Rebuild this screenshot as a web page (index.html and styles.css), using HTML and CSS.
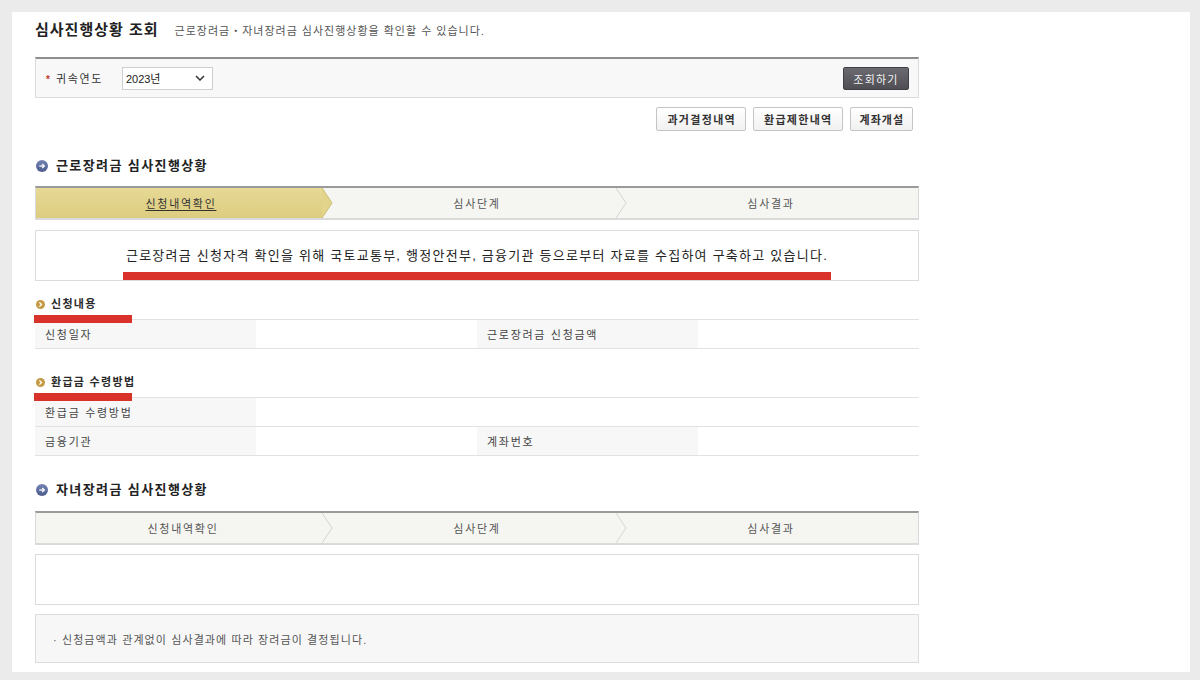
FILE: index.html
```html
<!DOCTYPE html>
<html lang="ko">
<head>
<meta charset="utf-8">
<title>심사진행상황 조회</title>
<link rel="stylesheet" href="styles.css">
</head>
<body>
<div class="frame">
  <div class="panel">
    <div class="content">
      <div class="page-head">
        <h1>심사진행상황 조회</h1>
        <p>근로장려금・자녀장려금 심사진행상황을 확인할 수 있습니다.</p>
      </div>

      <div class="search">
        <div class="field">
          <span class="req">*</span>
          <span class="label">귀속연도</span>
          <div class="select">2023년
            <svg class="sel-chev" width="10" height="6" viewBox="0 0 10 6"><polyline points="1,1 5,5 9,1" fill="none" stroke="#333" stroke-width="1.5"/></svg>
          </div>
        </div>
        <button class="btn-dark">조회하기</button>
      </div>

      <div class="btn-row">
        <button class="btn">과거결정내역</button>
        <button class="btn">환급제한내역</button>
        <button class="btn">계좌개설</button>
      </div>

      <h2 class="sec-title">
        <svg class="ico-sec" width="12" height="12" viewBox="0 0 12 12"><defs><linearGradient id="g1" x1="0" y1="0" x2="0" y2="1"><stop offset="0" stop-color="#7384b4"/><stop offset="1" stop-color="#4c5c8c"/></linearGradient></defs><circle cx="6" cy="6" r="6" fill="url(#g1)"/><line x1="3.3" y1="6" x2="8.2" y2="6" stroke="#fff" stroke-width="1.3"/><polyline points="6.2,4 8.3,6 6.2,8" fill="none" stroke="#fff" stroke-width="1.3"/></svg>
        근로장려금 심사진행상황
      </h2>

      <div class="steps">
        <div class="step active"><a class="step-link">신청내역확인</a>
          <svg class="chev" width="11" height="30" viewBox="0 0 11 30" preserveAspectRatio="none"><polygon points="0,0 10,15 0,30" fill="#e2d48b"/><polyline points="0,0 10,15 0,30" fill="none" stroke="#cbbb70" stroke-width="1"/></svg>
        </div>
        <div class="step">심사단계
          <svg class="chev" width="11" height="30" viewBox="0 0 11 30" preserveAspectRatio="none"><polyline points="0,0 10,15 0,30" fill="none" stroke="#d3d3d3" stroke-width="1"/></svg>
        </div>
        <div class="step">심사결과</div>
      </div>

      <div class="msg"><span class="mark">근로장려금 신청자격 확인을 위해 국토교통부, 행정안전부, 금융기관 등으로부터 자료를 수집하여 구축하고 있습니다.</span></div>

      <h3 class="sub-title">
        <svg class="ico-sub" width="9" height="9" viewBox="0 0 9 9"><circle cx="4.5" cy="4.5" r="4.5" fill="#c49a45"/><polyline points="3.4,2.4 5.5,4.5 3.4,6.6" fill="none" stroke="#fff" stroke-width="1.3"/></svg>
        신청내용
      </h3>
      <table class="info">
        <tr>
          <th>신청일자</th><td></td>
          <th>근로장려금 신청금액</th><td></td>
        </tr>
      </table>

      <h3 class="sub-title second">
        <svg class="ico-sub" width="9" height="9" viewBox="0 0 9 9"><circle cx="4.5" cy="4.5" r="4.5" fill="#c49a45"/><polyline points="3.4,2.4 5.5,4.5 3.4,6.6" fill="none" stroke="#fff" stroke-width="1.3"/></svg>
        환급금 수령방법
      </h3>
      <table class="info">
        <tr>
          <th>환급금 수령방법</th><td colspan="3"></td>
        </tr>
        <tr>
          <th>금융기관</th><td></td>
          <th>계좌번호</th><td></td>
        </tr>
      </table>

      <h2 class="sec-title sec2">
        <svg class="ico-sec" width="12" height="12" viewBox="0 0 12 12"><defs><linearGradient id="g2" x1="0" y1="0" x2="0" y2="1"><stop offset="0" stop-color="#7384b4"/><stop offset="1" stop-color="#4c5c8c"/></linearGradient></defs><circle cx="6" cy="6" r="6" fill="url(#g2)"/><line x1="3.3" y1="6" x2="8.2" y2="6" stroke="#fff" stroke-width="1.3"/><polyline points="6.2,4 8.3,6 6.2,8" fill="none" stroke="#fff" stroke-width="1.3"/></svg>
        자녀장려금 심사진행상황
      </h2>

      <div class="steps steps2">
        <div class="step">신청내역확인
          <svg class="chev" width="11" height="30" viewBox="0 0 11 30" preserveAspectRatio="none"><polyline points="0,0 10,15 0,30" fill="none" stroke="#d3d3d3" stroke-width="1"/></svg>
        </div>
        <div class="step">심사단계
          <svg class="chev" width="11" height="30" viewBox="0 0 11 30" preserveAspectRatio="none"><polyline points="0,0 10,15 0,30" fill="none" stroke="#d3d3d3" stroke-width="1"/></svg>
        </div>
        <div class="step">심사결과</div>
      </div>

      <div class="empty-box"></div>

      <div class="note">· 신청금액과 관계없이 심사결과에 따라 장려금이 결정됩니다.</div>
    </div>
  </div>
</div>
</body>
</html>
```

FILE: styles.css
```css
* {
  box-sizing: border-box;
  margin: 0;
  padding: 0;
}

html, body {
  width: 1200px;
  height: 680px;
  overflow: hidden;
}

body {
  background: #ebebeb;
  font-family: "Liberation Sans", "Noto Sans CJK KR", sans-serif;
  color: #333;
  font-size: 11px;
}

.frame {
  padding: 12px 10px 8px 12px;
  height: 680px;
}

.panel {
  background: #fff;
  height: 660px;
  padding: 8px 0 0 23px;
}

.content {
  width: 884px;
}

/* page head */
.page-head {
  display: flex;
  align-items: baseline;
  height: 20px;
  line-height: 20px;
  gap: 16px;
}

.page-head h1 {
  font-size: 15px;
  font-weight: bold;
  color: #222;
  letter-spacing: 1px;
}

.page-head p {
  font-size: 11px;
  color: #555;
  letter-spacing: 1px;
}

/* search box */
.search {
  margin-top: 17px;
  height: 41px;
  border: 1px solid #dcdcdc;
  border-top: 2px solid #8e8e8e;
  background: #f8f8f8;
  display: flex;
  align-items: center;
  justify-content: space-between;
  padding: 0 9px 0 10px;
}

.field {
  display: flex;
  align-items: center;
}

.req {
  color: #c0392b;
  font-weight: bold;
  font-size: 10px;
  width: 10px;
  line-height: 11px;
  padding-top: 3px;
}

.label {
  font-size: 11px;
  letter-spacing: 1.6px;
  color: #333;
}

.select {
  margin-left: 19px;
  width: 91px;
  height: 23px;
  border: 1px solid #cfcfcf;
  background: #fff;
  display: flex;
  align-items: center;
  justify-content: space-between;
  padding: 0 7px 0 3px;
  font-size: 11px;
  color: #222;
}

.btn-dark {
  width: 66px;
  height: 23px;
  border: 1px solid #3f3f44;
  border-radius: 2px;
  background: linear-gradient(#6a6a70, #4e4e54);
  color: #f2f2f2;
  font-family: inherit;
  font-size: 11px;
  letter-spacing: 1.2px;
  margin-top: 1px;
}

/* button row */
.btn-row {
  margin-top: 9px;
  display: flex;
  justify-content: flex-end;
  gap: 7px;
  padding-right: 6px;
}

.btn {
  height: 24px;
  padding: 0 9px 0 10px;
  border: 1px solid #c4c4c4;
  border-radius: 2px;
  background: linear-gradient(#ffffff, #f1f1f1);
  font-family: inherit;
  font-size: 11px;
  font-weight: bold;
  color: #333;
  letter-spacing: 1.3px;
}

.btn:last-child {
  padding: 0 8px 0 9px;
  letter-spacing: 1px;
}

/* section title */
.sec-title {
  margin-top: 25px;
  display: flex;
  align-items: center;
  gap: 8px;
  padding-left: 1px;
  height: 20px;
  line-height: 20px;
  font-size: 13px;
  font-weight: bold;
  color: #222;
  letter-spacing: 1.4px;
}

/* steps */
.steps {
  margin-top: 10px;
  height: 34px;
  display: flex;
  background: #f5f5f1;
  border: 1px solid #dadada;
  border-top: 2px solid #9a9a9a;
  border-bottom: 2px solid #dadada;
}

.steps2 {
  margin-top: 11px;
}

.step {
  flex: 1;
  position: relative;
  display: flex;
  align-items: center;
  justify-content: center;
  font-size: 11px;
  color: #555;
  letter-spacing: 1.7px;
}

.step.active {
  background: linear-gradient(#e6d995, #ddcd80) left top / calc(100% - 8px) 100% no-repeat;
  z-index: 2;
}

.step-link {
  color: #333;
  text-decoration: underline;
  text-underline-offset: 2px;
  padding-right: 4px;
}

.chev {
  position: absolute;
  top: 0;
  left: calc(100% - 8px);
  width: 11px;
  height: 100%;
  z-index: 3;
}

/* message */
.msg {
  margin-top: 10px;
  height: 51px;
  border: 1px solid #dcdcdc;
  display: flex;
  align-items: center;
  justify-content: center;
}

.mark {
  position: relative;
  display: inline-block;
  font-size: 13px;
  line-height: 20px;
  color: #222;
  letter-spacing: 1.25px;
}

.mark::after {
  content: "";
  position: absolute;
  left: -3px;
  right: -3px;
  top: 26px;
  height: 8px;
  background: #d8322a;
}

/* sub title */
.sub-title {
  position: relative;
  margin-top: 15px;
  display: flex;
  align-items: center;
  gap: 6px;
  padding-left: 1px;
  height: 16px;
  line-height: 16px;
  font-size: 11px;
  font-weight: bold;
  color: #2a2a2a;
  letter-spacing: 1.3px;
}

.sub-title.second {
  margin-top: 25px;
}

.sub-title::after {
  content: "";
  position: absolute;
  left: -1px;
  top: 19px;
  width: 98px;
  height: 8px;
  background: #d8322a;
  z-index: 4;
}

/* tables */
.info {
  margin-top: 7px;
  width: 100%;
  border-collapse: collapse;
  table-layout: fixed;
}

.info th,
.info td {
  height: 29px;
  border-top: 1px solid #e2e2e2;
  border-bottom: 1px solid #e2e2e2;
  font-size: 11px;
  font-weight: normal;
  text-align: left;
  color: #444;
  letter-spacing: 1.7px;
}

.info th {
  background: #f7f7f7;
  padding-left: 10px;
  width: 25%;
}

.info td {
  background: #fff;
}

.sec2 {
  margin-top: 24px;
}

/* empty box */
.empty-box {
  margin-top: 9px;
  height: 51px;
  border: 1px solid #dcdcdc;
}

/* note */
.note {
  margin-top: 9px;
  height: 49px;
  border: 1px solid #dcdcdc;
  background: #f7f7f7;
  display: flex;
  align-items: center;
  padding-left: 17px;
  font-size: 11px;
  color: #555;
  letter-spacing: 1.1px;
}
```
